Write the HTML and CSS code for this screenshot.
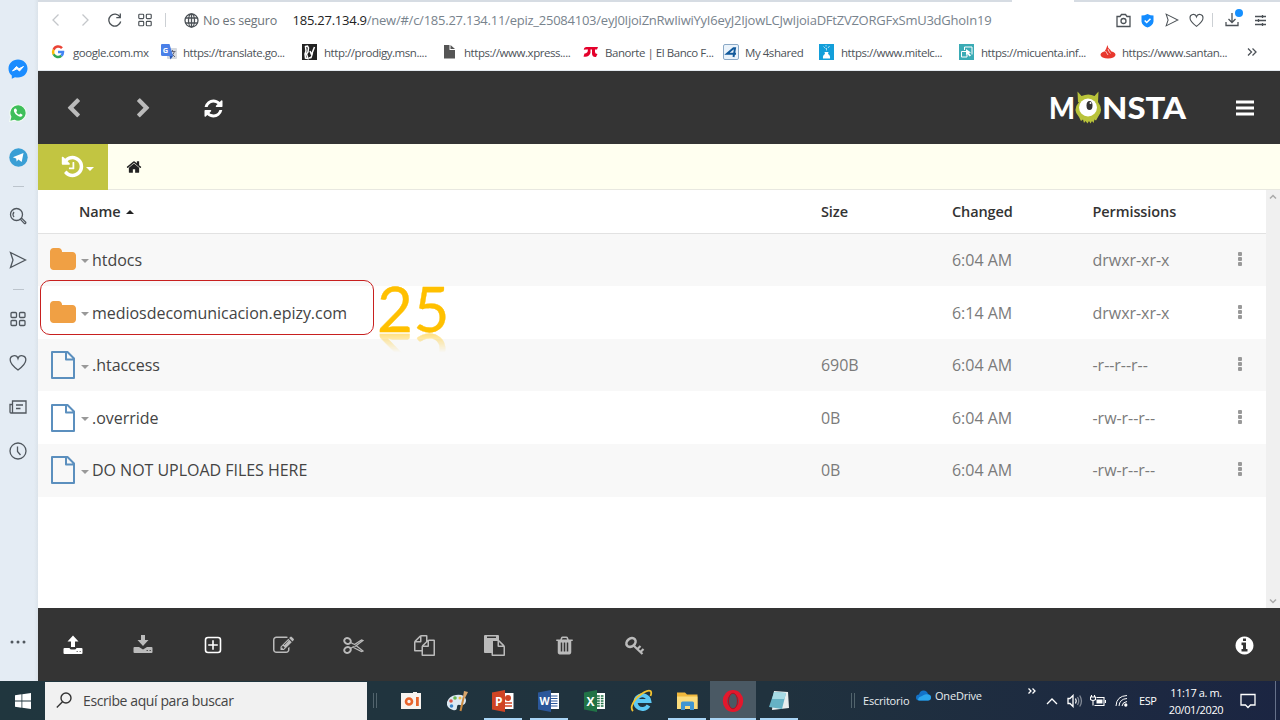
FILE: index.html
```html
<!DOCTYPE html>
<html lang="es">
<head>
    <meta charset="UTF-8">
    <meta name="viewport" content="width=device-width, initial-scale=1.0">
    <title>Monsta</title>
    <link rel="stylesheet" href="styles.css">
</head>
<body>
    <!-- shared icons -->
    <svg class="defs" width="0" height="0">
        <symbol id="folder" viewBox="0 0 1792 1792"><path d="M1728 608v704q0 92-66 158t-158 66h-1216q-92 0-158-66t-66-158v-960q0-92 66-158t158-66h320q92 0 158 66t66 158v32h672q92 0 158 66t66 158z"/></symbol>
        <symbol id="file" viewBox="0 0 24 28"><path d="M1 1h15.500l6.500 6.500v19.500h-22z M15 1v7.500h8" fill="none" stroke="#5b8fbe" stroke-width="2" stroke-linejoin="round"/></symbol>
        <symbol id="heart" viewBox="0 0 18 18"><path d="M9 16C5 13 1.200 9.600 1.200 6a4 4 0 0 1 7.800-1.500A4 4 0 0 1 16.800 6c0 3.600-3.800 7-7.800 10z"/></symbol>
        <symbol id="send" viewBox="0 0 18 18"><path d="M1.500 1.500l15 7.500-15 7.500 2.500-7.500z"/></symbol>
        <symbol id="tiles" viewBox="0 0 18 18"><rect x="2" y="2.500" width="5.500" height="5" rx="1"/><rect x="10.500" y="2.500" width="5.500" height="5" rx="1"/><rect x="2" y="10.500" width="5.500" height="5" rx="1"/><rect x="10.500" y="10.500" width="5.500" height="5" rx="1"/></symbol>
    </svg>

    <div class="workspace">
        <aside class="sidebar">
            <div class="side-item"><svg width="20" height="20" viewBox="0 0 20 20"><path d="M10 .500C4.500.500.500 4.500.500 9.700c0 3 1.300 5.200 3.300 6.800v3.200l3.200-1.500c1 .3 2 .4 3 .4 5.500 0 9.500-4 9.500-9S15.500.500 10 .500z" fill="#1a8cff"/><path d="M4.500 12l4-4.500 2.500 2.200 4.500-2.200-4 4.500L9 9.800z" fill="#fff" stroke="#fff"/></svg></div>
            <div class="side-item"><svg width="18" height="18" viewBox="0 0 18 18"><path d="M.500 17.500l1.300-4.600A8.200 8.200 0 1 1 5.300 16.300z" fill="#3fbf5a" stroke="#f4fbf6" stroke-width="1.200"/><path d="M6 4.500c-2 1-1 4 1 6s5 3 6.300 1.200c.5-.8 0-1.200-.6-1.500l-1.300-.6-1.300 1.200C8.700 10.200 7.500 9 7.200 8l.9-1-.7-2c-.2-.6-.9-.7-1.400-.5z" fill="#fff"/></svg></div>
            <div class="side-item"><svg width="19" height="19" viewBox="0 0 19 19"><circle cx="9.500" cy="9.500" r="9.200" fill="#3a9fd5"/><path d="M3.800 9.300l10.700-4.300-1.800 9-3.300-2.400-1.700 1.800-.6-3z" fill="#fff"/></svg></div>
            <div class="side-line"></div>
            <div class="side-item"><svg class="line" width="18" height="18" viewBox="0 0 18 18"><circle cx="7.500" cy="7.500" r="6"/><path d="M5 10a4 4 0 0 1 0-5M11.600 12.600l1.200-1.200 4 3.800q.2 1.400-1.300 1.500z"/></svg></div>
            <div class="side-item"><svg class="line" width="18" height="18"><use href="#send"/></svg></div>
            <div class="side-line"></div>
            <div class="side-item"><svg class="line" width="18" height="18"><use href="#tiles"/></svg></div>
            <div class="side-item"><svg class="line" width="18" height="18"><use href="#heart"/></svg></div>
            <div class="side-item"><svg class="line" width="18" height="18" viewBox="0 0 18 18"><path d="M3.500 15V3h13.500v12H2q-1 0-1-1V6.500h2.500M7 7h7M7 10.500h4.500"/></svg></div>
            <div class="side-item"><svg class="line" width="18" height="18" viewBox="0 0 18 18"><circle cx="9" cy="9" r="8"/><path d="M8.500 4.500V9.500l3 3.500"/></svg></div>
            <div class="side-item side-more"><svg width="16" height="4" viewBox="0 0 16 4"><circle cx="2" cy="2" r="1.500"/><circle cx="8" cy="2" r="1.500"/><circle cx="14" cy="2" r="1.500"/></svg></div>
        </aside>

        <main class="main">
            <div class="tab-edge"><span></span></div>
            <div class="address-bar">
                <div class="nav-cell off"><svg class="line" width="9" height="14" viewBox="0 0 9 14"><path d="M7.500 1.500L2 7l5.500 5.500"/></svg></div>
                <div class="nav-cell off"><svg class="line" width="9" height="14" viewBox="0 0 9 14"><path d="M1.500 1.500L7 7l-5.500 5.500"/></svg></div>
                <div class="nav-cell"><svg class="line" width="14" height="14" viewBox="0 0 14 14"><path d="M12 4A6 6 0 1 0 12.700 8.500M12.300.500v4.200h-4"/></svg></div>
                <div class="nav-cell"><svg class="line" width="16" height="16"><use href="#tiles"/></svg></div>
                <div class="bar-sep"></div>
                <svg class="line globe" width="15" height="15" viewBox="0 0 15 15"><circle cx="7.500" cy="7.500" r="6.500"/><ellipse cx="7.500" cy="7.500" rx="3" ry="6.500"/><path d="M1.500 5h12M1.500 10h12M7.500 1v13"/></svg>
                <span class="unsafe">No es seguro</span>
                <span class="url"><b>185.27.134.9</b>/new/#/c/185.27.134.11/epiz_25084103/eyJ0IjoiZnRwIiwiYyI6eyJ2IjowLCJwIjoiaDFtZVZORGFxSmU3dGhoIn19</span>
                <div class="tools">
                    <div class="tool"><svg class="line" width="15" height="15" viewBox="0 0 15 15"><path d="M1 3.500h3l1.500-2h4l1.500 2h3v10H1z"/><circle cx="7.500" cy="8" r="2.500"/></svg></div>
                    <div class="tool"><svg width="13" height="15" viewBox="0 0 13 15"><path d="M6.500 1q3 1.500 6 1.500V8.500q-.5 4-6 6-5.500-2-6-6V2.500q3 0 6-1.500z" fill="#148cff"/><path d="M3.700 7.500l2 2 3.800-3.800" fill="none" stroke="#fff" stroke-width="1.500"/></svg></div>
                    <div class="tool"><svg class="line" width="14" height="14"><use href="#send"/></svg></div>
                    <div class="tool"><svg class="line" width="15" height="15"><use href="#heart"/></svg></div>
                    <div class="bar-sep short"></div>
                    <div class="tool wide"><svg class="line" width="14" height="14" viewBox="0 0 14 14"><path d="M1 9v3.500h12V9M7 0v9.500M3.500 6L7 9.500 10.500 6"/></svg><i class="dot"></i></div>
                    <div class="tool last"><svg class="line" width="13" height="13" viewBox="0 0 13 13"><path d="M1 2.500h11M1 6.500h11M1 10.500h11M8.500 1v3M4.500 5v3M8.500 9v3"/></svg></div>
                </div>
            </div>
            <div class="bookmarks">
                <a><svg width="14" height="14" viewBox="0 0 14 14" fill="none" stroke-width="2.500"><path d="M11 3.200A5 5 0 0 0 2.600 4.700" stroke="#ea4335"/><path d="M2.600 4.700a5 5 0 0 0 0 4.600" stroke="#fbbc05"/><path d="M2.600 9.300A5 5 0 0 0 10.300 10.800" stroke="#34a853"/><path d="M10.300 10.800A5 5 0 0 0 12 7H7" stroke="#4285f4"/></svg><span>google.com.mx</span></a>
                <a><svg width="16" height="16" viewBox="0 0 16 16"><rect x="6" y="4" width="10" height="11" rx="1" fill="#d5d9df"/><path d="M8.500 7.500h6M11.500 6v1.500M13.500 7.500q-1 3.500-4 5M10 9l4 4" stroke="#667" fill="none"/><path d="M1 0h7.500l3.500 12H1.500Q0 12 0 10.500V1q0-1 1-1z" fill="#4a80e8"/><path d="M8.500 12h3.500L9.500 15.500z" fill="#2b59b5"/><text x="1.800" y="8.800" class="ico-text" font-size="7.500">G</text></svg><span>https://translate.go...</span></a>
                <a><svg width="15" height="16" viewBox="0 0 15 16"><path d="M0 0h15v16H0z" fill="#222"/><path d="M3.500 2.500l2-.5 1 2-.5 4-1.500 2 1.500 4.500-2.500-.5-.5-4 1-3zM8 7l1.500 3.500L12.500 3M10.500 9L9 13.500 7 14" fill="none" stroke="#fff" stroke-width="1.500"/></svg><span>http://prodigy.msn....</span></a>
                <a><svg width="14" height="16" viewBox="0 0 14 16"><path d="M2 1h5.500v5H13v8.500H2zM8.500 1L13 5H8.500z" fill="#555"/></svg><span>https://www.xpress....</span></a>
                <a><svg width="16" height="12" viewBox="0 0 16 12"><path d="M3.500 1Q1 1 .800 3.800L3 3.500h2L4.500 6Q3 7.500 1.500 7.500L.500 10.500Q6 11.500 7.500 7V3.500h1.500V8q.5 3.500 4 3l1.500-3q-2.500 0-2.500-2V3.500H14L15 1z" fill="#e4002b"/></svg><span>Banorte | El Banco F...</span></a>
                <a><svg width="16" height="16" viewBox="0 0 16 16"><rect x=".5" y=".5" width="15" height="15" rx="1.500" fill="#eaf3fb" stroke="#8ba9c6"/><path d="M10.500 13L12 4.300h-1.500L4 9.800h9" fill="none" stroke="#125a9c" stroke-width="2"/></svg><span>My 4shared</span></a>
                <a><svg width="15" height="16" viewBox="0 0 15 16"><path d="M0 0h15v16H0z" fill="#139fda"/><path d="M4 14.500q-.5-3.500 2-4.500l-.5-2h4L9 10q2.500 1 2 4.500z" fill="#fff"/><path d="M7.500 6.500V4M6.500 4.500L4.500 2.500M9 4l1.500-2M7 2.500V1" stroke="#cbeaf8" stroke-width=".8"/></svg><span>https://www.mitelc...</span></a>
                <a><svg width="15" height="16" viewBox="0 0 15 16"><path d="M0 0h15v16H0z" fill="#3aabb5"/><path d="M5.500 6V3H13v7.500M2.500 7.500H8V13H2.500z" fill="none" stroke="#fff"/><path d="M7 5l5 3.500-2 .5 2 2.500-1.500 1-2-2.500-1.500 1z" fill="#fff"/></svg><span>https://micuenta.inf...</span></a>
                <a><svg width="16" height="14" viewBox="0 0 16 14"><ellipse cx="8" cy="9.800" rx="7.500" ry="3.800" fill="#e8382e"/><path d="M7.500 0q0 3 3 5 1.500 2 .5 4.500-2 1.500-5 0-2.500-2.500 0-5.500z" fill="#e8382e"/><path d="M5.500 6q1 1.500 2.500 4M8 4q.5 2 2.500 4.500" stroke="#fff" fill="none" stroke-width=".7"/></svg><span>https://www.santan...</span></a>
                <a class="more"><svg class="line" width="10" height="8" viewBox="0 0 10 8"><path d="M1 .500L4.500 4 1 7.500M5.500.500L9 4 5.500 7.500"/></svg></a>
            </div>

            <header class="app-header">
                <button class="icon-btn dim"><svg width="21" height="21" viewBox="0 0 1792 1792"><path d="M1427 301l-531 531 531 531q19 19 19 45t-19 45l-166 166q-19 19-45 19t-45-19l-742-742q-19-19-19-45t19-45l742-742q19-19 45-19t45 19l166 166q19 19 19 45t-19 45z"/></svg></button>
                <button class="icon-btn dim"><svg width="21" height="21" viewBox="0 0 1792 1792"><path d="M1363 877l-742 742q-19 19-45 19t-45-19l-166-166q-19-19-19-45t19-45l531-531-531-531q-19-19-19-45t19-45l166-166q19-19 45-19t45 19l742 742q19 19 19 45t-19 45z"/></svg></button>
                <button class="icon-btn"><svg width="21" height="21" viewBox="0 0 1792 1792"><path d="M1639 1056q0 5-1 7-64 268-268 434.500t-478 166.500q-146 0-282.500-55t-243.500-157l-129 129q-19 19-45 19t-45-19-19-45v-448q0-26 19-45t45-19h448q26 0 45 19t19 45-19 45l-137 137q71 66 161 102t187 36q134 0 250-65t186-179q11-17 53-117 8-23 30-23h192q13 0 22.500 9.500t9.500 22.500zm25-800v448q0 26-19 45t-45 19h-448q-26 0-45-19t-19-45 19-45l138-138q-148-137-349-137-134 0-250 65t-186 179q-11 17-53 117-8 23-30 23h-199q-13 0-22.500-9.500t-9.500-22.500v-7q65-268 270-434.500t480-166.500q146 0 284 55.500t245 156.500l130-129q19-19 45-19t45 19 19 45z"/></svg></button>
                <svg class="logo" width="140" height="48" viewBox="0 -6 140 48">
                    <text x="-1" y="28.500" textLength="26" lengthAdjust="spacingAndGlyphs">M</text>
                    <path d="M28 12L27.500 1.500l4 4.500q7-3 13 0l4-4.500L48 12q6 8 0 15l-2 3.500-1.500-1-1 3.500-1.500-2-1.500 2.500-1.500-2.500-1.500 2.500-2-2.500-1.500 2-1-3.500-2 1.500-2-4q-7-7 0-15z" fill="#b9c33a"/>
                    <circle cx="38" cy="17.500" r="9" fill="#fff"/>
                    <ellipse cx="39.500" cy="15.500" rx="3" ry="4.500" fill="#333"/>
                    <circle cx="40.500" cy="13" r="1" fill="#fff"/>
                    <text x="52" y="28.500" textLength="84" lengthAdjust="spacingAndGlyphs">NSTA</text>
                </svg>
                <button class="icon-btn menu"><svg width="18" height="16" viewBox="0 0 18 16"><path d="M0 .500h18v3H0zM0 6.500h18v3H0zM0 12.500h18v3H0z"/></svg></button>
            </header>

            <div class="breadcrumb">
                <div class="history">
                    <svg width="25" height="25" viewBox="0 0 1792 1792"><path d="M1664 896q0 156-61 298t-164 245-245 164-298 61q-172 0-327-72.500t-264-204.500q-7-10-6.500-22.500t8.500-20.500l137-138q10-9 25-9 16 2 23 12 73 95 179 147t225 52q104 0 198.500-40.500t163.500-109.500 109.500-163.500 40.500-198.500-40.500-198.500-109.500-163.500-163.500-109.500-198.500-40.500q-98 0-188 35.500t-160 101.500l137 138q31 30 14 69-17 40-59 40h-448q-26 0-45-19t-19-45v-448q0-42 40-59 39-17 69 14l130 129q107-101 244.500-156.500t284.500-55.500q156 0 298 61t245 164 164 245 61 298zm-640-288v448q0 14-9 23t-23 9h-320q-14 0-23-9t-9-23v-64q0-14 9-23t23-9h224v-352q0-14 9-23t23-9h64q14 0 23 9t9 23z"/></svg>
                    <i class="caret"></i>
                </div>
                <svg class="home" width="16" height="16" viewBox="0 0 1792 1792"><path d="M1472 992v480q0 26-19 45t-45 19h-384v-384h-256v384h-384q-26 0-45-19t-19-45v-480q0-1 .5-3t.5-3l575-474 575 474q1 2 1 6zm223-69l-62 74q-8 9-21 11h-3q-13 0-21-7l-692-577-692 577q-12 8-24 7-13-2-21-11l-62-74q-8-10-7-23.500t11-21.500l719-599q32-26 76-26t76 26l244 204v-195q0-14 9-23t23-9h192q14 0 23 9t9 23v408l219 182q10 8 11 21.500t-7 23.500z"/></svg>
            </div>

            <div class="browser">
                <div class="files">
                    <div class="row head">
                        <div class="name">Name <i class="caret up"></i></div>
                        <div>Size</div>
                        <div>Changed</div>
                        <div>Permissions</div>
                    </div>
                    <div class="row">
                        <div class="name"><svg class="folder" width="28" height="28"><use href="#folder"/></svg><i class="caret"></i>htdocs</div>
                        <div></div>
                        <div>6:04 AM</div>
                        <div>drwxr-xr-x</div>
                        <div class="dots"><i></i><i></i><i></i></div>
                    </div>
                    <div class="row">
                        <div class="name"><svg class="folder" width="28" height="28"><use href="#folder"/></svg><i class="caret"></i>mediosdecomunicacion.epizy.com</div>
                        <div></div>
                        <div>6:14 AM</div>
                        <div>drwxr-xr-x</div>
                        <div class="dots"><i></i><i></i><i></i></div>
                    </div>
                    <div class="row">
                        <div class="name"><svg class="file" width="24" height="28"><use href="#file"/></svg><i class="caret"></i>.htaccess</div>
                        <div>690B</div>
                        <div>6:04 AM</div>
                        <div>-r--r--r--</div>
                        <div class="dots"><i></i><i></i><i></i></div>
                    </div>
                    <div class="row">
                        <div class="name"><svg class="file" width="24" height="28"><use href="#file"/></svg><i class="caret"></i>.override</div>
                        <div>0B</div>
                        <div>6:04 AM</div>
                        <div>-rw-r--r--</div>
                        <div class="dots"><i></i><i></i><i></i></div>
                    </div>
                    <div class="row">
                        <div class="name"><svg class="file" width="24" height="28"><use href="#file"/></svg><i class="caret"></i>DO NOT UPLOAD FILES HERE</div>
                        <div>0B</div>
                        <div>6:04 AM</div>
                        <div>-rw-r--r--</div>
                        <div class="dots"><i></i><i></i><i></i></div>
                    </div>
                </div>
                <div class="scrollbar">
                    <svg width="8" height="6" viewBox="0 0 8 6"><path d="M1 4.500l3-3 3 3"/></svg>
                    <svg width="8" height="6" viewBox="0 0 8 6"><path d="M1 1.500l3 3 3-3"/></svg>
                </div>
            </div>

            <footer class="app-footer">
                <button class="icon-btn"><svg width="20" height="20" viewBox="0 0 20 20"><path d="M10 .500l5.500 6H12V12H8V6.500H4.500zM1.500 13H6.500q.5 1.500 2 1.500h3q1.500 0 2-1.500h5q1 0 1 1v4q0 1-1 1h-17q-1 0-1-1v-4q0-1 1-1z"/><path d="M13.500 16.500h1.500M16.500 16.500H18" stroke="#888"/></svg></button>
                <button class="icon-btn dim"><svg width="20" height="20" viewBox="0 0 20 20"><path d="M8 0h4v5h3.500L10 11 4.500 5H8zM1.500 12H6l4 2.500L14 12h4.500q1 0 1 1v4q0 1-1 1h-17q-1 0-1-1v-4q0-1 1-1z"/><path d="M13.500 15.500h1.500M16.500 15.500H18" stroke="#555"/></svg></button>
                <button class="icon-btn"><svg width="18" height="18" viewBox="0 0 18 18"><rect x="1.500" y="1.500" width="15" height="15" rx="2.500" fill="none" stroke="currentColor" stroke-width="1.600"/><path d="M8.200 4.200h1.600v4h4v1.600h-4v4H8.200v-4h-4V8.200h4z"/></svg></button>
                <button class="icon-btn dim"><svg width="21" height="21" viewBox="0 0 1792 1792"><path d="M888 1184l116-116-152-152-116 116v56h96v96h56zm440-720q-16-16-33 1l-350 350q-17 17-1 33t33-1l350-350q17-17 1-33zm80 594v190q0 119-84.500 203.500t-203.500 84.500h-832q-119 0-203.500-84.500t-84.500-203.500v-832q0-119 84.500-203.500t203.500-84.500h832q63 0 117 25 15 7 18 23 3 17-9 29l-49 49q-14 14-32 8-23-6-45-6h-832q-66 0-113 47t-47 113v832q0 66 47 113t113 47h832q66 0 113-47t47-113v-126q0-13 9-22l64-64q15-15 35-7t20 29zm-96-738l288 288-672 672h-288v-288zm444 132l-92 92-288-288 92-92q28-28 68-28t68 28l152 152q28 28 28 68t-28 68z"/></svg></button>
                <button class="icon-btn dim"><svg width="21" height="19" viewBox="0 0 21 19"><g fill="none" stroke="currentColor"><ellipse cx="4.500" cy="5" rx="3.300" ry="2.800" stroke-width="2" transform="rotate(25 4.500 5)"/><ellipse cx="4.500" cy="14" rx="3.300" ry="2.800" stroke-width="2" transform="rotate(-25 4.500 14)"/><path d="M7.500 6.500l4 2 7-4.500 1.500.5-8 6M7.500 12.500l4-2.500M10.500 11.500l8 4 1.500-.5-7-5.500" stroke-width="1.300"/></g><circle cx="10.800" cy="9.500" r=".8" fill="#333"/></svg></button>
                <button class="icon-btn dim"><svg width="21" height="21" viewBox="0 0 1792 1792"><path d="M1696 384q40 0 68 28t28 68v1216q0 40-28 68t-68 28h-960q-40 0-68-28t-28-68v-288h-544q-40 0-68-28t-28-68v-672q0-40 20-88t48-76l408-408q28-28 76-48t88-20h416q40 0 68 28t28 68v328q68-40 128-40h416zm-544 213l-299 299h299v-299zm-640-384l-299 299h299v-299zm196 647l316-316v-416h-384v416q0 40-28 68t-68 28h-416v640h512v-256q0-40 20-88t48-76zm956 804v-1152h-384v416q0 40-28 68t-68 28h-416v640h896z"/></svg></button>
                <button class="icon-btn dim"><svg width="21" height="21" viewBox="0 0 1792 1792"><path d="M768 1664h896v-640h-416q-40 0-68-28t-28-68v-416h-384v1152zm256-1440v-64q0-13-9.500-22.500t-22.500-9.500h-704q-13 0-22.500 9.500t-9.500 22.500v64q0 13 9.500 22.500t22.500 9.500h704q13 0 22.500-9.500t9.500-22.500zm256 672h299l-299-299v299zm512 128v672q0 40-28 68t-68 28h-960q-40 0-68-28t-28-68v-160h-544q-40 0-68-28t-28-68v-1344q0-40 28-68t68-28h1088q40 0 68 28t28 68v328q21 13 36 28l408 408q28 28 48 76t20 88z"/></svg></button>
                <button class="icon-btn dim"><svg width="21" height="21" viewBox="0 0 1792 1792"><path d="M704 1376v-704q0-14-9-23t-23-9h-64q-14 0-23 9t-9 23v704q0 14 9 23t23 9h64q14 0 23-9t9-23zm256 0v-704q0-14-9-23t-23-9h-64q-14 0-23 9t-9 23v704q0 14 9 23t23 9h64q14 0 23-9t9-23zm256 0v-704q0-14-9-23t-23-9h-64q-14 0-23 9t-9 23v704q0 14 9 23t23 9h64q14 0 23-9t9-23zm-544-992h448l-48-117q-7-9-17-11h-317q-10 2-17 11zm928 32v64q0 14-9 23t-23 9h-96v948q0 83-47 143.500t-113 60.500h-832q-66 0-113-58.500t-47-141.500v-952h-96q-14 0-23-9t-9-23v-64q0-14 9-23t23-9h309l70-167q15-37 54-63t79-26h320q40 0 79 26t54 63l70 167h309q14 0 23 9t9 23z"/></svg></button>
                <button class="icon-btn dim"><svg width="21" height="21" viewBox="0 0 21 21"><ellipse cx="7" cy="7.500" rx="5" ry="3.900" transform="rotate(-40 7 7.500)" fill="none" stroke="currentColor" stroke-width="2.600"/><path d="M9.500 10.500l9 8.500M13.500 14l3-3M16.500 17l3-3" fill="none" stroke="currentColor" stroke-width="2.200"/></svg></button>
                <button class="icon-btn menu"><svg width="21" height="21" viewBox="0 0 1792 1792"><path d="M1152 1376v-160q0-14-9-23t-23-9h-96v-512q0-14-9-23t-23-9h-320q-14 0-23 9t-9 23v160q0 14 9 23t23 9h96v320h-96q-14 0-23 9t-9 23v160q0 14 9 23t23 9h448q14 0 23-9t9-23zm-128-896v-160q0-14-9-23t-23-9h-192q-14 0-23 9t-9 23v160q0 14 9 23t23 9h192q14 0 23-9t9-23zm640 416q0 209-103 385.500t-279.500 279.500-385.500 103-385.500-103-279.500-279.500-103-385.500 103-385.500 279.500-279.500 385.500-103 385.500 103 279.500 279.500 103 385.500z"/></svg></button>
            </footer>
        </main>
    </div>

    <div class="taskbar">
        <div class="start"><svg width="16" height="16" viewBox="0 0 16 16"><path d="M0 2.200l6.500-.9v6.200H0zM7.300 1.200L16 0v7.500H7.300zM0 8.400h6.500v6.300L0 13.800zM7.300 8.400H16V16l-8.700-1.200z"/></svg></div>
        <div class="search">
            <svg width="16" height="17" viewBox="0 0 16 17"><circle cx="10" cy="6" r="5"/><path d="M6.500 9.800L.800 15.500"/></svg>
            <span>Escribe aquí para buscar</span>
        </div>
        <div class="grip"></div>
        <div class="apps">
            <div class="app"><svg width="20" height="20" viewBox="0 0 20 20"><path d="M0 2h12V1h4v1h4v16H0z" fill="#f8f4f0"/><circle cx="8" cy="10.500" r="3" fill="none" stroke="#e8642c" stroke-width="2.600"/><path d="M15 6h2.800v9H15z" fill="#e8642c"/></svg></div>
            <div class="app"><svg width="22" height="22" viewBox="0 0 22 22"><path d="M10 5q9-1 10 5 0 6-6 5-3-1-3 2 0 4-4 3-7-2-6-8 2-6 9-7z" fill="#dce9f3"/><circle cx="5" cy="11" r="1.800" fill="#dc5548"/><circle cx="9" cy="8" r="1.800" fill="#68b750"/><circle cx="14" cy="8" r="1.500" fill="#f0bd42"/><circle cx="5.500" cy="16" r="1.800" fill="#3b86cb"/><path d="M14.500 21L18 6" stroke="#c98a40" stroke-width="2"/><path d="M17 7l1-6 4 1-3 6z" fill="#d9a56a"/></svg></div>
            <div class="app open"><svg width="22" height="22" viewBox="0 0 22 22"><path d="M11 3h10.500v16H11z" fill="#fff"/><circle cx="16" cy="8" r="3" fill="#d04424"/><path d="M13 13h7M13 16h7" stroke="#d04424" stroke-width="1.500"/><path d="M0 2.500L13 0v22L0 19.500z" fill="#d04424"/><text x="3" y="15.500" class="ico-text" font-size="12">P</text></svg></div>
            <div class="app open"><svg width="22" height="22" viewBox="0 0 22 22"><path d="M11 3h10v16H11z" fill="#fff"/><path d="M13 6h6.500M13 8.500h6.500M13 11h6.500M13 13.500h6.500M13 16h6.500" stroke="#2b579a"/><path d="M0 2.500L13 0v22L0 19.500z" fill="#2b579a"/><text x="1.500" y="15" class="ico-text" font-size="10.500">W</text></svg></div>
            <div class="app"><svg width="22" height="22" viewBox="0 0 22 22"><path d="M11 3h10v16H11z" fill="#fff"/><path d="M13 6h6.500M13 8.500h6.500M13 11h6.500M13 13.500h6.500M13 16h6.500" stroke="#217346" stroke-width="1.500"/><path d="M16.300 4v14" stroke="#fff"/><path d="M0 2.500L13 0v22L0 19.500z" fill="#217346"/><text x="2.500" y="15.500" class="ico-text" font-size="12">X</text></svg></div>
            <div class="app"><svg width="23" height="24" viewBox="0 0 23 24"><path d="M18.500 16.500a7 6.800 0 1 1 .8-4.500H7" fill="none" stroke="#5cc8f4" stroke-width="4"/><path d="M3 22Q-1 18 7 8.500 17 0 20.500 2q1.500 1.500 0 5" fill="none" stroke="#f4c430" stroke-width="1.800"/></svg></div>
            <div class="app open"><svg width="21" height="20" viewBox="0 0 21 20"><path d="M0 1.500h8l2 2h10.500V18H0z" fill="#f0b83c"/><path d="M0 5.500h20.500V18H0z" fill="#fbdc7c"/><path d="M4 19v-7q0-1.500 1.500-1.500h10q1.500 0 1.500 1.500v7h-4v-4H8v4z" fill="#3f96d2"/></svg></div>
            <div class="app open active"><svg width="22" height="22" viewBox="0 0 22 22"><ellipse cx="11" cy="11" rx="8" ry="8.700" fill="none" stroke="#e3172c" stroke-width="4.500"/><ellipse cx="11" cy="11" rx="4.500" ry="7.800" fill="#4a5964" stroke="#b00f20"/></svg></div>
            <div class="app open"><svg width="22" height="22" viewBox="0 0 22 22"><path d="M6 1l14 1 1 16-17 2z" fill="#e9eeee"/><path d="M6 2l12 1-4 16-13-2z" fill="#66b2c5"/><path d="M6 2l12 1-1.500 6L4 9z" fill="#a7dbe5"/></svg></div>
        </div>
        <div class="grip far"></div>
        <span class="desk">Escritorio</span>
        <div class="onedrive">
            <svg width="15" height="11" viewBox="0 0 15 11"><path d="M3 4.500Q4 .500 7.500.500T12 4q3 .5 3 3.500T12 10.500H3Q0 10.500 0 7.500t3-3z" fill="#1372c8"/><path d="M2 10q0-3 4-4 3-2.500 6-1.500 3 .5 3 3T12 10.500H3z" fill="#2ba5ec"/></svg>
            <span>OneDrive</span>
        </div>
        <div class="tray">
            <svg class="line chevrons" width="8" height="6" viewBox="0 0 8 6"><path d="M.500.500L3 3 .500 5.500M4.500.500L7 3 4.500 5.500"/></svg>
            <svg class="line" width="12" height="8" viewBox="0 0 12 8"><path d="M1 7l5-5 5 5"/></svg>
            <svg class="line vol" width="16" height="14" viewBox="0 0 16 14"><path d="M1 4.500h2L6 1.500v11L3 9.500H1z"/><path d="M8.500 4.500q1.500 2.500 0 5"/><path d="M10.500 3q2.500 4 0 8M12.700 1.500q3.500 5.500 0 11" opacity=".45"/></svg>
            <svg class="line bat" width="16" height="12" viewBox="0 0 16 12"><path d="M1.500 0v2M4.500 0v2M.500 2h5v2.500q-2.500 2-5 0zM3 5.500v5M6.500 2.500h7.500v8H4.500M15.500 5v3" stroke-width="1.100"/><path d="M6.500 4.500h6v4h-6z" fill="currentColor" stroke="none"/></svg>
            <svg class="line wifi" width="13" height="13" viewBox="0 0 13 13"><path d="M1 12Q1.500 2 12 1.500M4 12Q4.500 5 12 4.500M7 12q.5-4 5-4.500" stroke-width="1"/><circle cx="10.800" cy="11" r="1" fill="currentColor"/></svg>
            <span class="lang">ESP</span>
            <div class="clock"><div>11:17 a. m.</div><div>20/01/2020</div></div>
            <svg class="line note" width="16" height="16" viewBox="0 0 16 16"><path d="M1 1.500h14v10.500h-4.500L8 14.500 5.500 12H1z"/></svg>
            <div class="peek"></div>
        </div>
    </div>

    <div class="highlight"></div>
    <div class="step">25</div>
</body>
</html>
```
FILE: styles.css
```css
* {
    box-sizing: border-box;
}
body {
    margin: 0;
    width: 1280px;
    height: 720px;
    overflow: hidden;
    position: relative;
    display: flex;
    flex-direction: column;
    background-color: #fff;
    font-family: "Open Sans", "Noto Sans", sans-serif;
}
svg {
    display: block;
    flex: none;
}
.defs {
    position: absolute;
}
.line {
    fill: none;
    stroke: currentColor;
    stroke-width: 1.3;
}
.ico-text {
    font-family: "Open Sans", sans-serif;
    font-weight: bold;
    fill: #fff;
}
.workspace {
    display: flex;
    height: 681px;
}

/* opera sidebar */
.sidebar {
    width: 38px;
    padding-top: 47px;
    display: flex;
    flex-direction: column;
    background: linear-gradient(to right, #e4ecf4 34px, #dbe3ea);
    color: #50575e;
}
.side-item {
    height: 44px;
    display: flex;
    align-items: center;
    justify-content: center;
    padding-right: 2px;
}
.side-line {
    width: 11px;
    height: 1px;
    margin: 7px auto 7px 13px;
    background-color: #bcc4cc;
}
.side-more {
    margin-top: auto;
    margin-bottom: 17px;
    fill: #50575e;
}

.main {
    flex: 1;
    display: flex;
    flex-direction: column;
    min-width: 0;
}
.tab-edge {
    height: 2px;
    background-color: #d6dce3;
}
.tab-edge span {
    display: block;
    width: 62px;
    height: 2px;
    margin-left: 974px;
    background-color: #fff;
}
.address-bar {
    height: 36px;
    padding-left: 2px;
    display: flex;
    align-items: center;
    color: #4c5257;
    font-size: 13px;
}
.nav-cell {
    width: 30px;
    display: flex;
    justify-content: center;
}
.off {
    color: #c4c7ca;
}
.bar-sep {
    width: 1px;
    height: 14px;
    margin: 0 18px 0 5px;
    background-color: #ccd0d4;
}
.bar-sep.short {
    margin: 0 3px;
}
.unsafe {
    width: 93.500px;
    padding-left: 4px;
    color: #6c7379;
    font-size: 12.500px;
    letter-spacing: -0.2px;
    white-space: nowrap;
}
.url {
    color: #78838d;
    letter-spacing: -0.240px;
    white-space: nowrap;
}
.url b {
    font-weight: normal;
    color: #222;
}
.tools {
    display: flex;
    align-items: center;
    margin-left: auto;
    padding-right: 6px;
}
.tool {
    width: 24.500px;
    display: flex;
    justify-content: center;
    position: relative;
}
.tool.wide {
    width: 31px;
}
.tool.last {
    width: 27px;
}
.dot {
    position: absolute;
    left: 19px;
    top: -4px;
    width: 8px;
    height: 8px;
    border-radius: 50%;
    background-color: #1690ff;
}
.bookmarks {
    height: 33px;
    padding: 0 0 4px 13px;
    display: grid;
    grid-template-columns: 110px 141px 140px 141px 140px 96px 140px 141px 147px auto;
    align-items: center;
    border-bottom: 1px solid #e4eaef;
    font-size: 11.500px;
    letter-spacing: -0.450px;
    color: #4d5258;
}
.bookmarks a {
    display: grid;
    grid-template-columns: 22px auto;
    align-items: center;
    justify-content: start;
    white-space: nowrap;
}

/* monsta */
.app-header,
.app-footer {
    display: flex;
    align-items: center;
    background-color: #343434;
}
.app-header {
    height: 73px;
}
.icon-btn {
    width: 70.200px;
    padding: 1px 0 0;
    display: flex;
    justify-content: center;
    border: none;
    background: none;
    color: #fff;
    fill: currentColor;
}
.icon-btn.dim {
    color: #bbb;
}
.logo {
    margin-left: auto;
    margin-right: 20px;
    fill: #fff;
    font: 900 31px Lato, sans-serif;
}
.breadcrumb {
    height: 46px;
    display: flex;
    align-items: center;
    background-color: #fffff0;
    border-bottom: 1px solid #e8e8e0;
}
.history {
    width: 70px;
    height: 46px;
    padding-left: 22px;
    display: flex;
    align-items: center;
    gap: 1px;
    background-color: #c2c541;
    color: #fff;
    fill: #fff;
}
.home {
    margin-left: 18px;
    fill: #222;
}
.caret {
    width: 0;
    height: 0;
    border: 4px solid transparent;
    border-top-color: currentColor;
    border-bottom: none;
}
.caret.up {
    border-top: none;
    border-bottom: 4px solid #222;
}
.history .caret {
    margin-top: 5px;
}
.browser {
    flex: 1;
    display: flex;
}
.files {
    flex: 1;
}
.row {
    height: 52.600px;
    display: grid;
    grid-template-columns: 783px 131px 140.500px 141.500px 1fr;
    align-items: center;
    font-size: 16px;
    letter-spacing: -0.030px;
    color: #7b7b7b;
}
.row:nth-child(even) {
    background-color: #f8f8f8;
}
.row.head {
    height: 43.700px;
    border-bottom: 1px solid #e2e2e2;
    font-size: 14.500px;
    letter-spacing: -0.1px;
    font-weight: 600;
    color: #333;
}
.name {
    display: flex;
    align-items: center;
    color: #444;
}
.head .name {
    padding-left: 41px;
    gap: 5px;
    color: #333;
}
.name .folder {
    margin-left: 11px;
    fill: #f0a044;
}
.name .file {
    margin: 0 2px 0 13px;
}
.row .name .caret {
    margin: 3px 3px 0 4px;
    color: #999;
}
.row.head .name .caret {
    margin: 2px 0 0;
}
.dots {
    width: 5px;
    margin: 0 0 2px 4px;
    display: flex;
    flex-direction: column;
    gap: 1px;
}
.dots i {
    width: 4px;
    height: 4px;
    border-radius: 1px;
    background-color: #999;
}
.scrollbar {
    width: 14px;
    padding: 4px 3px;
    display: flex;
    flex-direction: column;
    justify-content: space-between;
    background-color: #f0f0f0;
    fill: none;
    stroke: #aaa;
    stroke-width: 1.5;
}
.app-footer {
    height: 73px;
}
.icon-btn.menu {
    margin-left: auto;
}
.logo + .icon-btn.menu {
    margin-left: 0;
}

/* windows taskbar */
.taskbar {
    height: 39px;
    display: flex;
    align-items: center;
    background: linear-gradient(to right, #20363e, #20323e 60%, #1b2542);
    color: #e8edf0;
    font-size: 11px;
}
.start {
    width: 45px;
    display: flex;
    justify-content: center;
    fill: #fff;
}
.search {
    width: 322px;
    height: 38px;
    padding-left: 11px;
    display: flex;
    align-items: center;
    gap: 11px;
    background-color: #f1f1f1;
    color: #444;
    font-size: 14px;
    letter-spacing: -0.4px;
    fill: none;
    stroke-width: 1.4;
}
.search svg {
    stroke: #333;
}
.grip {
    width: 4px;
    height: 15px;
    margin: 0 17px 0 6px;
    border: 1px solid #52646d;
    border-width: 0 1px;
}
.grip.far {
    margin: 0 8px 0 49px;
}
.apps {
    display: flex;
    height: 39px;
    margin-left: -6px;
}
.app {
    width: 46px;
    display: flex;
    align-items: center;
    justify-content: center;
    background: no-repeat center bottom / 38px 2px;
}
.app.open {
    background-image: linear-gradient(#a9d5f5, #a9d5f5);
}
.app.active {
    background-color: #4a5964;
    background-size: 46px 2px;
}
.desk {
    width: 53px;
    letter-spacing: -0.2px;
}
.onedrive {
    display: flex;
    align-items: center;
    gap: 4px;
    padding-bottom: 10px;
    letter-spacing: -0.2px;
}
.tray {
    flex: 1;
    height: 39px;
    display: flex;
    align-items: center;
    justify-content: flex-end;
    color: #fff;
}
.chevrons {
    margin: 0 10px 20px 0;
}
.vol {
    margin-left: 9px;
}
.bat {
    margin-left: 7px;
}
.wifi {
    margin-left: 9px;
}
.lang {
    width: 26px;
    margin-left: 11px;
    letter-spacing: -0.4px;
}
.clock {
    width: 62px;
    text-align: center;
    line-height: 17px;
    letter-spacing: -0.4px;
}
.note {
    margin-left: 13px;
}
.peek {
    width: 5px;
    height: 39px;
    margin-left: 19px;
    border-left: 1px solid #66718a;
}

/* annotations over the page */
.highlight {
    position: absolute;
    left: 40px;
    top: 280px;
    width: 334px;
    height: 55px;
    border: 1px solid #c8201f;
    border-radius: 10px;
}
.step {
    position: absolute;
    left: 377px;
    top: 284px;
    height: 49px;
    font: 62px/48px Lato, sans-serif;
    letter-spacing: 0.5px;
    color: #ffc000;
    -webkit-text-stroke: 0.3px #ffc000;
    -webkit-box-reflect: below 0 linear-gradient(transparent 60%, rgba(0, 0, 0, 0.5));
}
```
